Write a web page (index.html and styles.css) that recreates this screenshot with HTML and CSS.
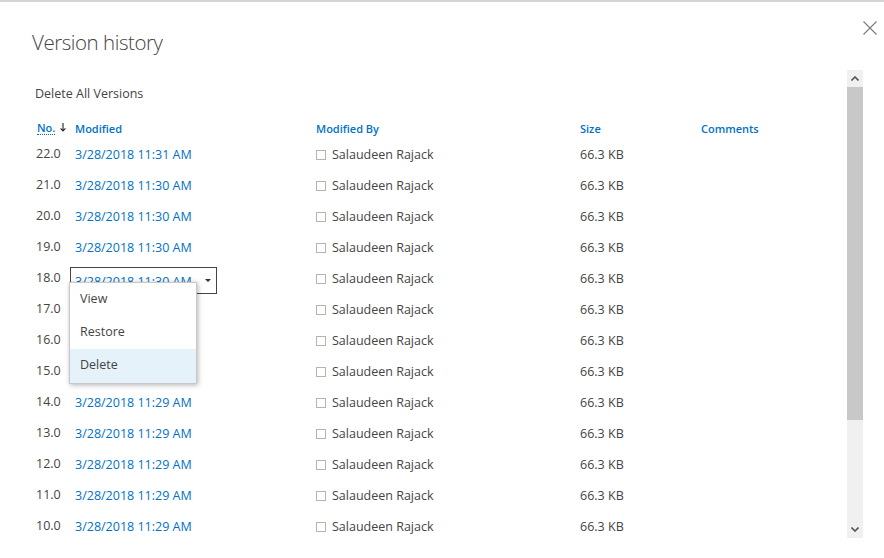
FILE: index.html
```html
<!DOCTYPE html>
<html>
<head>
<meta charset="utf-8">
<link rel="stylesheet" href="styles.css">
</head>
<body>
<div class="dialog">
  <div class="dlg-head">
    <h1 class="title">Version history</h1>
    <button class="close" aria-label="Close">
      <svg width="14" height="14" viewBox="0 0 14 14"><path d="M0.5 0.5L13.5 13.5M13.5 0.5L0.5 13.5" stroke="#7a7a7a" stroke-width="1.1" fill="none"/></svg>
    </button>
  </div>
  <div class="scroller">
    <div class="list">
      <a class="delete-all">Delete All Versions</a>
      <div class="grid head">
        <div class="c1"><span class="no">No.</span><svg class="sort" width="6" height="9" viewBox="0 0 6 9"><path d="M3 0V8M0.6 5.4L3 8L5.4 5.4" stroke="#222" stroke-width="1.1" fill="none"/></svg></div>
        <div class="c2">Modified</div>
        <div class="c3">Modified By</div>
        <div class="c4">Size</div>
        <div class="c5">Comments</div>
      </div>
      <div class="rows">
      <div class="grid row"><div class="c1">22.0</div><div class="c2 link">3/28/2018 11:31 AM</div><div class="c3"><span class="chk"></span>Salaudeen Rajack</div><div class="c4">66.3 KB</div><div class="c5"></div></div>
      <div class="grid row"><div class="c1">21.0</div><div class="c2 link">3/28/2018 11:30 AM</div><div class="c3"><span class="chk"></span>Salaudeen Rajack</div><div class="c4">66.3 KB</div><div class="c5"></div></div>
      <div class="grid row"><div class="c1">20.0</div><div class="c2 link">3/28/2018 11:30 AM</div><div class="c3"><span class="chk"></span>Salaudeen Rajack</div><div class="c4">66.3 KB</div><div class="c5"></div></div>
      <div class="grid row"><div class="c1">19.0</div><div class="c2 link">3/28/2018 11:30 AM</div><div class="c3"><span class="chk"></span>Salaudeen Rajack</div><div class="c4">66.3 KB</div><div class="c5"></div></div>
      <div class="grid row"><div class="c1">18.0</div>
        <div class="c2 link drop-cell">
          <div class="drop"><span class="drop-text">3/28/2018 11:30 AM</span><span class="caret"></span></div>
          <ul class="menu">
            <li>View</li>
            <li>Restore</li>
            <li class="hot">Delete</li>
          </ul>
        </div>
        <div class="c3"><span class="chk"></span>Salaudeen Rajack</div><div class="c4">66.3 KB</div><div class="c5"></div></div>
      <div class="grid row"><div class="c1">17.0</div><div class="c2 link"></div><div class="c3"><span class="chk"></span>Salaudeen Rajack</div><div class="c4">66.3 KB</div><div class="c5"></div></div>
      <div class="grid row"><div class="c1">16.0</div><div class="c2 link"></div><div class="c3"><span class="chk"></span>Salaudeen Rajack</div><div class="c4">66.3 KB</div><div class="c5"></div></div>
      <div class="grid row"><div class="c1">15.0</div><div class="c2 link"></div><div class="c3"><span class="chk"></span>Salaudeen Rajack</div><div class="c4">66.3 KB</div><div class="c5"></div></div>
      <div class="grid row"><div class="c1">14.0</div><div class="c2 link">3/28/2018 11:29 AM</div><div class="c3"><span class="chk"></span>Salaudeen Rajack</div><div class="c4">66.3 KB</div><div class="c5"></div></div>
      <div class="grid row"><div class="c1">13.0</div><div class="c2 link">3/28/2018 11:29 AM</div><div class="c3"><span class="chk"></span>Salaudeen Rajack</div><div class="c4">66.3 KB</div><div class="c5"></div></div>
      <div class="grid row"><div class="c1">12.0</div><div class="c2 link">3/28/2018 11:29 AM</div><div class="c3"><span class="chk"></span>Salaudeen Rajack</div><div class="c4">66.3 KB</div><div class="c5"></div></div>
      <div class="grid row"><div class="c1">11.0</div><div class="c2 link">3/28/2018 11:29 AM</div><div class="c3"><span class="chk"></span>Salaudeen Rajack</div><div class="c4">66.3 KB</div><div class="c5"></div></div>
      <div class="grid row"><div class="c1">10.0</div><div class="c2 link">3/28/2018 11:29 AM</div><div class="c3"><span class="chk"></span>Salaudeen Rajack</div><div class="c4">66.3 KB</div><div class="c5"></div></div>
      </div>
    </div>
    <div class="scrollbar">
      <div class="sb-btn"><svg width="8" height="5" viewBox="0 0 8 5"><path d="M0.5 4.5L4 1L7.5 4.5" stroke="#555" stroke-width="1.6" fill="none"/></svg></div>
      <div class="sb-thumb"></div>
      <div class="sb-track"></div>
      <div class="sb-btn"><svg width="8" height="5" viewBox="0 0 8 5"><path d="M0.5 0.5L4 4L7.5 0.5" stroke="#555" stroke-width="1.6" fill="none"/></svg></div>
    </div>
  </div>
</div>
</body>
</html>
```
FILE: styles.css
```css
* { box-sizing: border-box; }
html, body {
  margin: 0;
  padding: 0;
  width: 884px;
  height: 558px;
  overflow: hidden;
  background: #fff;
}
body {
  font-family: "Open Sans", "Noto Sans", "Liberation Sans", sans-serif;
  font-size: 12.5px;
  color: #444;
  border-top: 2px solid #d4d4d4;
}
.dialog {
  display: flex;
  flex-direction: column;
  height: 556px;
}
.dlg-head {
  display: flex;
  justify-content: space-between;
  align-items: flex-start;
  height: 68px;
}
.title {
  margin: 26px 0 0 32px;
  font-size: 20.5px;
  font-weight: 300;
  color: #444;
  line-height: 28px;
  letter-spacing: -0.45px;
}
.close {
  margin: 19px 7px 0 0;
  padding: 0;
  border: 0;
  background: transparent;
  width: 14px;
  height: 14px;
  display: flex;
}
.scroller {
  display: flex;
  height: 468px;
  padding-right: 21px;
}
.list {
  flex: 1;
  padding: 15px 0 0 35px;
}
.delete-all {
  display: block;
  height: 18px;
  line-height: 18px;
  color: #444;
}
.grid {
  display: grid;
  grid-template-columns: 40px 241px 264px 121px 1fr;
  align-items: center;
}
.head {
  margin-top: 16px;
  height: 18px;
  font-size: 11px;
  color: #0072c6;
  font-weight: 600;
}
.head .c1 {
  padding-left: 2px;
  display: flex;
  align-items: center;
}
.no {
  border-bottom: 1px dotted #0072c6;
  line-height: 13px;
}
.sort {
  margin: -2px 0 0 5px;
}
.rows {
  padding-top: 2px;
}
.row {
  height: 31px;
}
.row .c1 { padding-left: 1px; margin-top: -2px; }
.link { color: #0072c6; }
.c3 {
  display: flex;
  align-items: center;
}
.chk {
  width: 10px;
  height: 10px;
  border: 1px solid #b4b4b4;
  margin: 0 6px 0 0;
}
.row .c4 { margin-top: -1px; }
.drop-cell {
  position: relative;
  height: 31px;
}
.drop {
  position: absolute;
  left: -5px;
  top: 4px;
  width: 147px;
  height: 27px;
  border: 1px solid #444;
  display: flex;
  align-items: center;
  padding: 2px 0 0 4px;
  background: #fff;
}
.drop-text { flex: 1; color: #0072c6; }
.caret {
  width: 0;
  height: 0;
  border-left: 3px solid transparent;
  border-right: 3px solid transparent;
  border-top: 3px solid #333;
  margin: -2px 5px 0 0;
}
.menu {
  position: absolute;
  left: -6px;
  top: 19px;
  width: 128px;
  margin: 0;
  padding: 0;
  list-style: none;
  background: #fff;
  border: 1px solid #c8c8c8;
  box-shadow: 1px 1px 5px rgba(0, 0, 0, 0.3);
  z-index: 5;
  color: #444;
}
.menu li {
  height: 33px;
  line-height: 31px;
  padding-left: 10px;
}
.menu li.hot { background: #e6f2fa; height: 34px; }
.scrollbar {
  width: 16px;
  display: flex;
  flex-direction: column;
  background: #f0f0f0;
}
.sb-btn {
  height: 17px;
  display: flex;
  align-items: center;
  justify-content: center;
}
.sb-thumb {
  height: 333px;
  background: #c8c8c8;
}
.sb-track { flex: 1; }
```
